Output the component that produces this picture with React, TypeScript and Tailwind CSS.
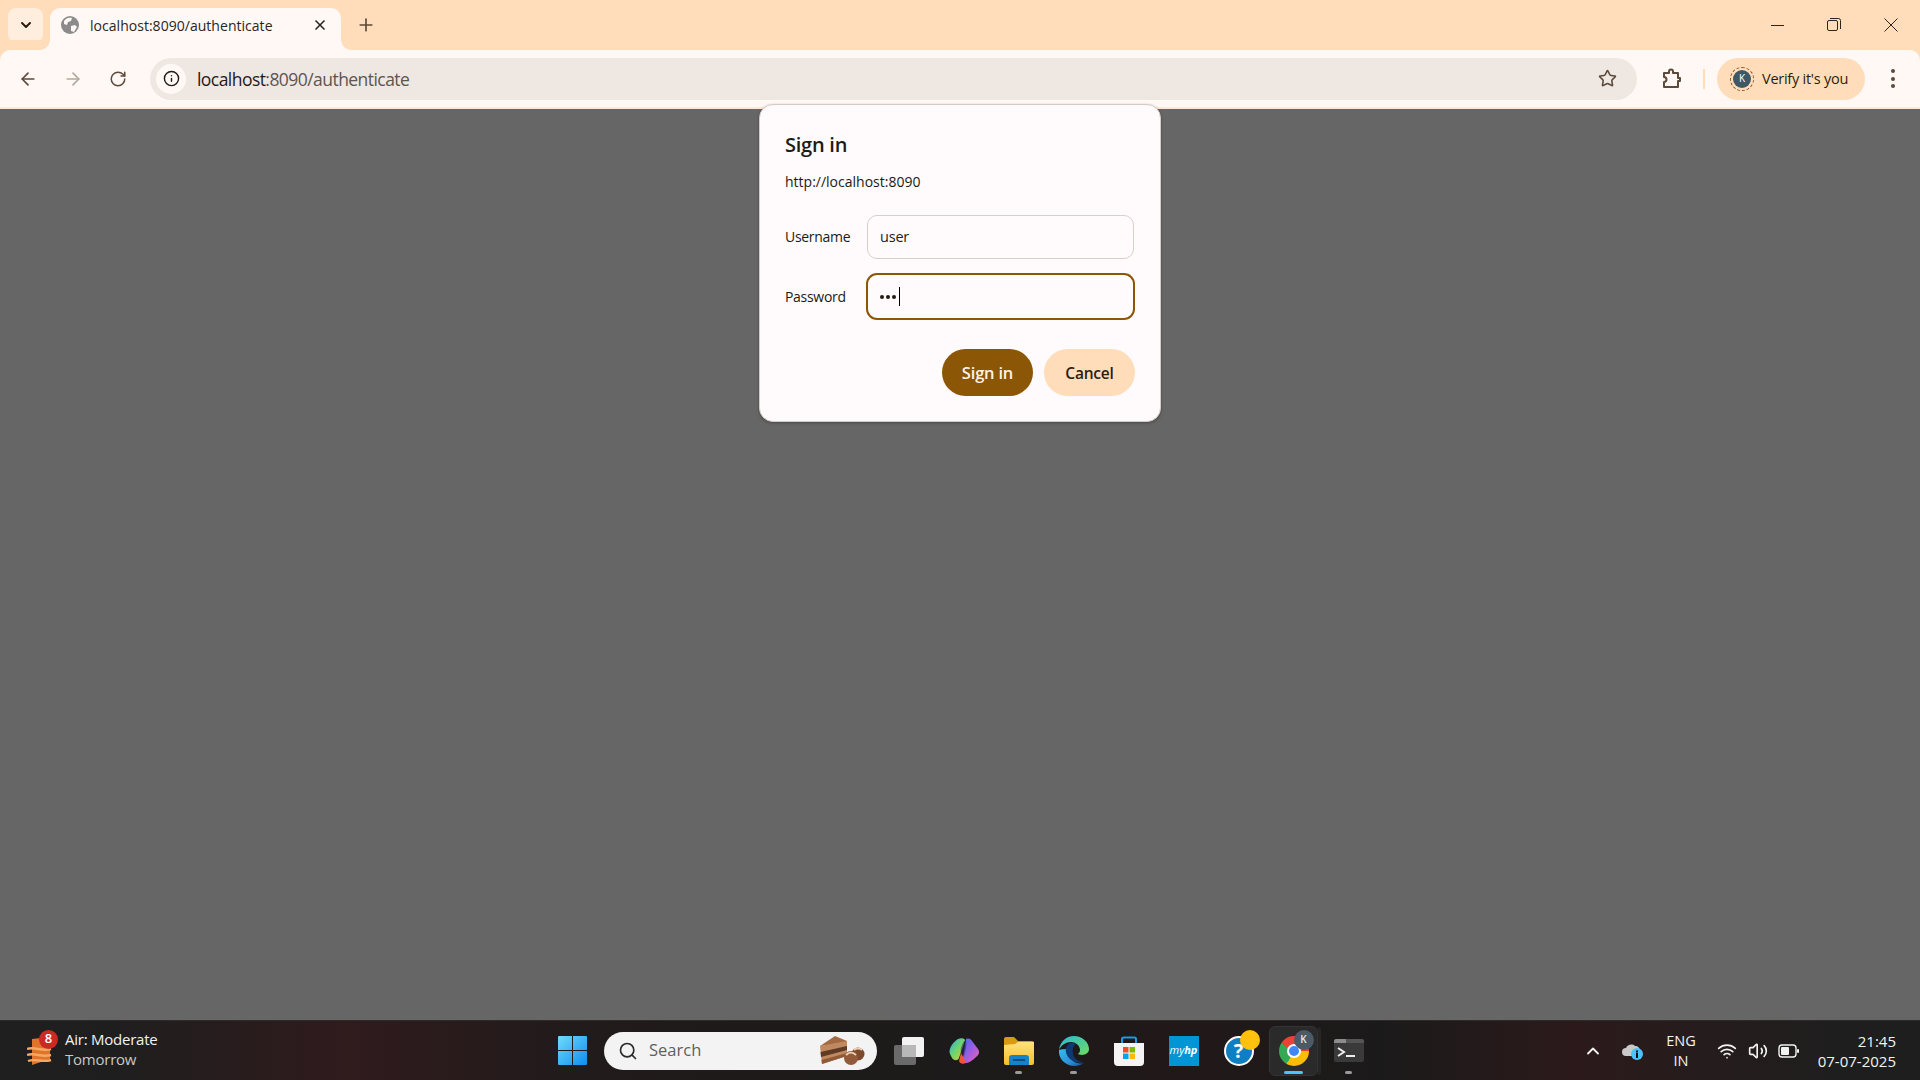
import { ArrowLeft, ArrowRight, ChevronDown, ChevronUp, Info, Plus, RotateCw, Search, Star, Volume2, Wifi, X } from "lucide-react";

const font = "font-['Open_Sans','Noto_Sans',sans-serif]";

function GlobeFavicon() {
  return (
    <svg width="18" height="18" viewBox="0 0 18 18">
      <circle cx="9" cy="9" r="9" fill="#8b8b8b" />
      <path d="M3 5c2-3 5-4 8-3l-1 3-3 1-1 3-3-1zM10 10l4-1 2 2-3 5-3-1z" fill="#fff8f5" />
    </svg>
  );
}

function ExtensionIcon() {
  return (
    <svg width="22" height="22" viewBox="0 0 22 22" fill="none" stroke="#5c4a3a" strokeWidth="2" strokeLinejoin="round">
      <path d="M3 5h5V3.500a2 2 0 0 1 4 0V5h5v5h2v3h-2v6H3v-5a2.500 2.500 0 0 0 0-5z" />
    </svg>
  );
}

function RestoreIcon() {
  return (
    <svg width="14" height="14" viewBox="0 0 14 14" fill="none" stroke="#2b241f" strokeWidth="1">
      <rect x="0.5" y="2.5" width="10" height="10" rx="1.5" />
      <path d="M3 .5h8.500a2 2 0 0 1 2 2V11" />
    </svg>
  );
}

function CloseIcon() {
  return (
    <svg width="14" height="14" viewBox="0 0 14 14" fill="none" stroke="#2b241f" strokeWidth="1">
      <path d="M.5.5l13 13M13.500.5l-13 13" />
    </svg>
  );
}

function WeatherIcon() {
  return (
    <svg width="26" height="30" viewBox="0 0 26 30">
      <path d="M5 3l18-2v22L5 29z" fill="#e0742a" />
      <path d="M0 13c8-3 14 3 24 0M0 19c8-3 14 3 24 0M1 25c8-3 14 2 23-1" stroke="#f6a860" strokeWidth="2.4" fill="none" />
    </svg>
  );
}

function WindowsLogo() {
  return (
    <svg width="29" height="29" viewBox="0 0 29 29">
      <defs>
        <linearGradient id="win" x1="0" y1="0" x2="1" y2="1">
          <stop offset="0" stopColor="#6fdcfb" />
          <stop offset="1" stopColor="#0f8cf0" />
        </linearGradient>
      </defs>
      <path d="M1 0h13v14H0V1a1 1 0 0 1 1-1zM15 0h13a1 1 0 0 1 1 1v13H15zM0 15h14v14H1a1 1 0 0 1-1-1zM15 15h14v13a1 1 0 0 1-1 1H15z" fill="url(#win)" />
    </svg>
  );
}

function CakeIcon() {
  return (
    <svg width="46" height="30" viewBox="0 0 46 30">
      <path d="M0 10 15 0l12 5v3z" fill="#a36a44" />
      <path d="M0 10 27 5v15L2 28z" fill="#c08a60" />
      <path d="M0.5 16 27 10v4L1 21z" fill="#5f3a24" />
      <path d="M1.500 24 27 17v3L2 28z" fill="#8f5a3a" />
      <circle cx="38" cy="18" r="6.5" fill="#7d4a2d" />
      <circle cx="31" cy="22" r="7" fill="#915a38" />
      <path d="M26 19c3-3 7-3 10 0M34 14c2-2 6-2 8 0" stroke="#ead0b5" strokeWidth="2" fill="none" />
    </svg>
  );
}

function TaskViewIcon() {
  return (
    <svg width="30" height="28" viewBox="0 0 30 28">
      <rect x="0" y="8" width="22" height="20" rx="2" fill="#6a6a6a" />
      <rect x="8" y="0" width="22" height="20" rx="2" fill="#f2f2f2" />
      <rect x="8" y="8" width="14" height="12" fill="#b8b8b8" />
    </svg>
  );
}

function CopilotIcon() {
  return (
    <svg width="30" height="26" viewBox="0 0 30 26">
      <defs>
        <linearGradient id="copA" x1="0" y1="0" x2="1" y2="1">
          <stop offset="0" stopColor="#2fa8e8" />
          <stop offset="0.5" stopColor="#6fd66a" />
          <stop offset="1" stopColor="#f7c02b" />
        </linearGradient>
        <linearGradient id="copB" x1="0" y1="0" x2="1" y2="1">
          <stop offset="0" stopColor="#3a6bf0" />
          <stop offset="0.55" stopColor="#a85be0" />
          <stop offset="1" stopColor="#f06aa8" />
        </linearGradient>
      </defs>
      <path d="M9 1c3-1.500 6-1 7 1l-6 18c-1 3-5 3-7 0L1 16C-1 11 4 4 9 1z" fill="url(#copA)" />
      <path d="M17 1c3-1 5 0 6 2l6 8c2 3 1 6-2 8-4 4-9 7-12 6-2-1-2-3-1-5z" fill="url(#copB)" />
      <path d="M12 15l5 9c-2 3-6 2-7-1z" fill="#f0553a" />
      <path d="M15 3c-2 4-4 7-3 12l3 3c1-4 3-9 2-15z" fill="#2a2a66" opacity="0.55" />
    </svg>
  );
}

function FolderIcon() {
  return (
    <svg width="30" height="28" viewBox="0 0 30 28">
      <defs>
        <linearGradient id="fold" x1="0" y1="0" x2="0" y2="1">
          <stop offset="0" stopColor="#ffe27a" />
          <stop offset="1" stopColor="#f6bd2c" />
        </linearGradient>
      </defs>
      <path d="M0 2a2 2 0 0 1 2-2h8l4 4h14a2 2 0 0 1 2 2v4H0z" fill="#d99a12" />
      <path d="M0 8l11-1 3-2h16v21a2 2 0 0 1-2 2H2a2 2 0 0 1-2-2z" fill="url(#fold)" />
      <path d="M5 28v-7a3 3 0 0 1 3-3h14a3 3 0 0 1 3 3v7z" fill="#1583c9" />
      <rect x="9" y="22" width="12" height="2" fill="#0b4f86" />
    </svg>
  );
}

function EdgeIcon() {
  return (
    <svg width="30" height="30" viewBox="0 0 30 30">
      <defs>
        <linearGradient id="edgeA" x1="0" y1="0" x2="1" y2="1">
          <stop offset="0" stopColor="#2fc2e8" />
          <stop offset="0.6" stopColor="#2f8fd8" />
          <stop offset="1" stopColor="#0b4f96" />
        </linearGradient>
        <linearGradient id="edgeB" x1="0" y1="0" x2="1" y2="1">
          <stop offset="0" stopColor="#2cb7d9" />
          <stop offset="1" stopColor="#6fdc5f" />
        </linearGradient>
      </defs>
      <path d="M15 0C7 0 1 6 0 14c2-5 7-8 12-8 4 0 9 3 9 8 0 2-1 3-2 4 3 2 11 1 11-5C30 6 23 0 15 0z" fill="url(#edgeB)" />
      <path d="M0 14C-1 23 7 30 15 30c4 0 7-1 10-3-3 1-8 1-12-3-3-3-3-8 0-11-6 0-11 0-13 1z" fill="url(#edgeA)" />
      <path d="M12 7c-4 1-7 6-4 12 3 6 10 9 17 7-5 0-10-3-11-8-1-4 0-8 3-10-2-1-3-1-5-1z" fill="#0d3a74" />
    </svg>
  );
}

function StoreIcon() {
  return (
    <svg width="30" height="30" viewBox="0 0 30 30">
      <path d="M8 7V3a1.500 1.500 0 0 1 1.500-1.500h11A1.500 1.500 0 0 1 22 3v4" fill="none" stroke="#1d9be0" strokeWidth="2" />
      <path d="M0 7h30v19a4 4 0 0 1-4 4H4a4 4 0 0 1-4-4z" fill="#f4f4f4" />
      <rect x="9" y="11" width="5.500" height="5.500" fill="#f25022" />
      <rect x="15.500" y="11" width="5.500" height="5.500" fill="#7fba00" />
      <rect x="9" y="17.500" width="5.500" height="5.500" fill="#00a4ef" />
      <rect x="15.500" y="17.500" width="5.500" height="5.500" fill="#ffb900" />
    </svg>
  );
}

function TerminalIcon() {
  return (
    <svg width="30" height="24" viewBox="0 0 30 24">
      <rect width="30" height="22" y="1" rx="2" fill="#3a3a3a" />
      <path d="M2 0h10v4H0V2a2 2 0 0 1 2-2z" fill="#8c8c8c" />
      <path d="M12 0h16a2 2 0 0 1 2 2v2H12z" fill="#555" />
      <path d="M4 9l6 4-6 4" fill="none" stroke="#eee" strokeWidth="2" />
      <path d="M12 17h9" stroke="#eee" strokeWidth="2" />
    </svg>
  );
}

function CloudIcon() {
  return (
    <svg width="22" height="20" viewBox="0 0 22 20">
      <path d="M4 15a4 4 0 0 1 0-8c1-3 6-5 9-2 3 0 5 2 5 5v5z" fill="#c9c9c9" />
      <circle cx="15" cy="13" r="6" fill="#4cc2ff" />
      <rect x="14" y="12" width="2" height="5" fill="#111" />
      <rect x="14" y="9.500" width="2" height="2" fill="#111" />
    </svg>
  );
}

function BatteryIcon() {
  return (
    <svg width="21" height="14" viewBox="0 0 21 14">
      <rect x="1" y="1" width="17" height="12" rx="3" fill="none" stroke="#f2f2f2" strokeWidth="1.400" />
      <rect x="3" y="3" width="8" height="8" rx="1" fill="#f2f2f2" />
      <rect x="19" y="5" width="2" height="4" rx="1" fill="#f2f2f2" />
    </svg>
  );
}

function TaskbarApp({ children, dot, active }: { children: React.ReactNode; dot?: boolean; active?: boolean }) {
  return (
    <div className="relative flex h-[50px] w-[55px] items-center justify-center">
      {active && (
        <>
          <div className="absolute left-[3px] top-0 h-[50px] w-[49px] rounded-md border border-[#333] bg-[#2a2a2a]" />
          <div className="absolute left-[52px] top-px h-[48px] w-[3px] rounded-r-md bg-[#262626]" />
        </>
      )}
      <div className="relative flex">{children}</div>
      {dot && <div className="absolute bottom-[2px] left-[24px] h-[3px] w-[7px] rounded-full bg-[#9a9a9a]" />}
      {active && <div className="absolute bottom-[2px] left-[18px] h-[3px] w-[19px] rounded-full bg-[#4cc2ff]" />}
    </div>
  );
}

export default function App() {
  return (
    <div className={`${font} flex h-screen w-screen flex-col overflow-hidden bg-[#666666]`}>
      {/* tab strip */}
      <div className="flex h-[50px] shrink-0 items-end bg-[#ffddbb] pl-2">
        <div className="mb-2 flex h-[34px] w-[35px] items-center justify-center rounded-lg bg-[#ffeedd]">
          <ChevronDown size={16} strokeWidth={3} className="text-[#2b1d10]" />
        </div>
        <div className="relative ml-[7px] flex h-[42px] w-[291px] items-center rounded-t-[10px] bg-[#fff8f5] pb-2 pl-[11px] pr-[13px]">
          <div className="absolute bottom-0 left-[-10px] h-2.5 w-2.5 bg-[radial-gradient(circle_at_0_0,#ffddbb_9.5px,#fff8f5_10px)]" />
          <div className="absolute bottom-0 right-[-10px] h-2.5 w-2.5 bg-[radial-gradient(circle_at_100%_0,#ffddbb_9.5px,#fff8f5_10px)]" />
          <GlobeFavicon />
          <span className="ml-[11px] flex-1 text-[14px] tracking-[0.03px] text-[#2a2521]">localhost:8090/authenticate</span>
          <X size={16} strokeWidth={2.5} className="text-[#2b241f]" />
        </div>
        <div className="mb-2 ml-[15px] flex h-[34px] w-5 items-center justify-center">
          <Plus size={20} strokeWidth={2} className="text-[#5c4a3a]" />
        </div>
        <div className="mb-2 ml-auto flex h-[34px] items-center text-[#2b241f]">
          <div className="mr-px flex w-[55px] justify-center">
            <div className="h-px w-[13px] bg-[#2b241f]" />
          </div>
          <div className="flex w-[56px] justify-center">
            <RestoreIcon />
          </div>
          <div className="flex w-[58px] justify-center">
            <CloseIcon />
          </div>
        </div>
      </div>

      {/* toolbar */}
      <div className="flex h-[59px] shrink-0 items-center rounded-t-[10px] border-b-2 border-[#ffe8d6] bg-[#fff8f5] shadow-[0_-10px_0_#ffddbb] pl-[18px]">
        <ArrowLeft size={20} className="text-[#5c4a3a]" />
        <ArrowRight size={20} className="ml-[25px] text-[#b3a89f]" />
        <RotateCw size={18} className="ml-[26px] text-[#5c4a3a]" />
        <div className="ml-[23px] flex h-[42px] w-[1487px] items-center rounded-full bg-[#efe7e2] pl-[6px] pr-5">
          <div className="flex h-[30px] w-[30px] items-center justify-center rounded-full bg-[#fff8f5]">
            <Info size={17} strokeWidth={2} className="text-[#1f1a16]" />
          </div>
          <span className="ml-[11px] flex-1 pt-0.5 text-[17.5px] tracking-[-0.55px] text-[#1f1a16]">
            localhost<span className="text-[#5b5650]">:8090/authenticate</span>
          </span>
          <Star size={19} strokeWidth={2} className="text-[#5c4a3a]" />
        </div>
        <div className="ml-6 flex">
          <ExtensionIcon />
        </div>
        <div className="ml-5 h-5 w-0.5 bg-[#ffddbb]" />
        <div className="ml-[12px] flex h-[42px] w-[148px] items-center rounded-full bg-[#ffddbb] pl-[13px]">
          <div className="flex h-6 w-6 items-center justify-center rounded-full border border-dashed border-[#8b5a2b] p-[2px]">
            <div className="flex h-[18px] w-[18px] items-center justify-center rounded-full bg-[#3f5866] text-[10px] text-white">K</div>
          </div>
          <span className="ml-2 text-[14.5px] tracking-[-0.25px] text-[#2a1d10]">Verify it's you</span>
        </div>
        <div className="ml-[26px] flex flex-col gap-[3.5px]">
          <div className="h-[4px] w-[4px] rounded-full bg-[#5c4a3a]" />
          <div className="h-[4px] w-[4px] rounded-full bg-[#5c4a3a]" />
          <div className="h-[4px] w-[4px] rounded-full bg-[#5c4a3a]" />
        </div>
      </div>

      {/* page */}
      <div className="relative flex-1 bg-[#666666]">
        <div className="absolute left-[759px] top-[-5px] flex h-[318px] w-[402px] flex-col rounded-[14px] border border-[#d5cbc4] bg-[#fffbfd] px-[25px] pt-[27px] shadow-[0_1px_3px_rgba(0,0,0,0.3)]">
          <h1 className="text-[20px] font-semibold leading-[26px] tracking-[-0.25px] text-[#201a14]">Sign in</h1>
          <p className="mt-[14px] text-[14px] leading-[20px] text-[#201a14]">http://localhost:8090</p>
          <div className="mt-[23px] flex h-[44px] items-center">
            <label className="w-[82px] pb-0.5 text-[14px] tracking-[-0.3px] text-[#201a14]">Username</label>
            <div className="flex h-[44px] w-[267px] items-center rounded-[10px] border-[1.5px] border-[#d8cfc8] pl-3 text-[14.5px] tracking-[-0.2px] text-[#201a14]">user</div>
          </div>
          <div className="mt-[14px] flex h-[47px] items-center">
            <label className="w-[81px] text-[14px] tracking-[-0.3px] text-[#201a14]">Password</label>
            <div className="flex h-[47px] w-[270px] items-center rounded-[11px] border-[2.5px] border-[#8b5606] pl-[12px]">
              <div className="flex gap-[2px]">
                <span className="h-1 w-1 rounded-full bg-[#201a14]" />
                <span className="h-1 w-1 rounded-full bg-[#201a14]" />
                <span className="h-1 w-1 rounded-full bg-[#201a14]" />
              </div>
              <div className="ml-[3px] h-[19px] w-px bg-black" />
            </div>
          </div>
          <div className="mt-[29px] flex justify-end gap-[11px]">
            <button className="h-[47px] w-[91px] rounded-full bg-[#8b5606] pt-0.5 text-[16.5px] font-semibold tracking-[-0.2px] text-[#fff3e6]">Sign in</button>
            <button className="h-[47px] w-[91px] rounded-full bg-[#ffddbb] pt-0.5 text-[15.5px] font-semibold tracking-[-0.2px] text-[#2a1d10]">Cancel</button>
          </div>
        </div>
      </div>

      {/* taskbar */}
      <div className="flex h-[60px] shrink-0 items-center border-t border-[#2c2a2a] bg-[linear-gradient(90deg,#1f1f1f_0%,#1f1e1e_6%,#301b1d_18%,#211b1b_30%,#1c1a1a_50%,#211819_62%,#1b1a1a_72%,#2c1a1b_82%,#1e1e1e_96%)] text-[#f2f2f2]">
        <div className="relative ml-[27px] flex h-[30px] w-[26px] items-center">
          <WeatherIcon />
          <div className="absolute left-[12px] top-[-6px] flex h-[19px] w-[19px] items-center justify-center rounded-full bg-[#c92a23] text-[13px] font-semibold text-white">8</div>
        </div>
        <div className="mb-1 ml-[12px] flex w-[493px] flex-col text-[15px] leading-[20px] tracking-[-0.24px]">
          <span>Air: Moderate</span>
          <span className="text-[#c8c8c8]">Tomorrow</span>
        </div>
        <WindowsLogo />
        <div className="ml-[17px] flex h-[38px] w-[273px] items-center rounded-full bg-[#f3f3f3] pl-[14px] pr-[11px] text-[#5f5f5f]">
          <Search size={20} strokeWidth={2} className="text-[#2b2b2b]" />
          <span className="ml-[11px] flex-1 text-[16.5px]">Search</span>
          <CakeIcon />
        </div>
        <div className="ml-[17px] flex">
          <TaskViewIcon />
        </div>
        <div className="ml-[12px] flex items-center">
          <TaskbarApp>
            <CopilotIcon />
          </TaskbarApp>
          <TaskbarApp dot>
            <FolderIcon />
          </TaskbarApp>
          <TaskbarApp dot>
            <EdgeIcon />
          </TaskbarApp>
          <TaskbarApp>
            <StoreIcon />
          </TaskbarApp>
          <TaskbarApp>
            <div className="flex h-[30px] w-[30px] items-center justify-center bg-[#0096d6] text-[11px] italic text-white">
              my<span className="font-bold">hp</span>
            </div>
          </TaskbarApp>
          <TaskbarApp>
            <div className="flex h-[30px] w-[30px] items-center justify-center rounded-full border-2 border-white bg-[#0f7fc4] text-[20px] font-bold text-white">?</div>
            <div className="absolute left-[16px] top-[-6px] h-5 w-5 rounded-full bg-[#ffc10d]" />
          </TaskbarApp>
          <TaskbarApp active>
            <div className="flex h-[30px] w-[30px] items-center justify-center rounded-full bg-[conic-gradient(#ea4335_0deg_90deg,#fbbc04_90deg_210deg,#34a853_210deg_300deg,#ea4335_300deg_360deg)]">
              <div className="h-[14px] w-[14px] rounded-full border-[2px] border-white bg-[#4285f4]" />
            </div>
            <div className="absolute left-[15px] top-[-6px] flex h-5 w-5 items-center justify-center rounded-full bg-[#4a5a66] text-[10px] font-semibold text-[#e8e8e8]">K</div>
          </TaskbarApp>
          <TaskbarApp dot>
            <TerminalIcon />
          </TaskbarApp>
        </div>
        <div className="ml-[207px] flex">
          <ChevronUp size={20} strokeWidth={2.2} />
        </div>
        <div className="ml-[19px] flex">
          <CloudIcon />
        </div>
        <div className="ml-[21px] flex w-[32px] flex-col items-center text-[14.5px] leading-[20px]">
          <span>ENG</span>
          <span>IN</span>
        </div>
        <div className="ml-[20px] flex">
          <Wifi size={20} />
        </div>
        <div className="ml-[11px] flex">
          <Volume2 size={20} />
        </div>
        <div className="ml-[10px] flex">
          <BatteryIcon />
        </div>
        <div className="ml-[10px] flex w-[87px] flex-col items-end text-[15px] leading-[20px]">
          <span>21:45</span>
          <span>07-07-2025</span>
        </div>
      </div>
    </div>
  );
}
